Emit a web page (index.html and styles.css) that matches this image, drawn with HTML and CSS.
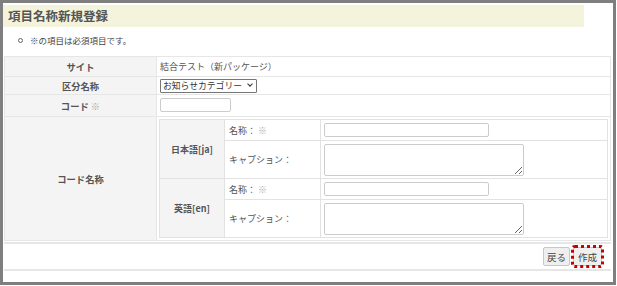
FILE: index.html
```html
<!DOCTYPE html>
<html lang="ja">
<head>
  <meta charset="UTF-8">
  <title>項目名称新規登録</title>
  <link rel="stylesheet" href="styles.css">
</head>
<body>
  <div class="frame">
    <h1 class="page-title">項目名称新規登録</h1>

    <ul class="notes">
      <li>※の項目は必須項目です。</li>
    </ul>

    <table class="form-table">
      <tr class="row-site">
        <th>サイト</th>
        <td>結合テスト（新パッケージ）</td>
      </tr>
      <tr class="row-kind">
        <th>区分名称</th>
        <td>
          <span class="select-wrap">
            <select class="kind-select">
              <option>お知らせカテゴリー</option>
            </select>
          </span>
        </td>
      </tr>
      <tr class="row-code">
        <th>コード <span class="req">※</span></th>
        <td><input type="text" class="code-input"></td>
      </tr>
      <tr>
        <th>コード名称</th>
        <td class="nested-cell">
          <table class="lang-table">
            <tr class="row-name">
              <th rowspan="2" class="lang">日本語[ja]</th>
              <td class="sub">名称： <span class="req">※</span></td>
              <td class="field"><input type="text" class="name-input"></td>
            </tr>
            <tr class="row-caption">
              <td class="sub">キャプション：</td>
              <td class="field"><textarea class="caption-input"></textarea></td>
            </tr>
            <tr class="row-name">
              <th rowspan="2" class="lang">英語[en]</th>
              <td class="sub">名称： <span class="req">※</span></td>
              <td class="field"><input type="text" class="name-input"></td>
            </tr>
            <tr class="row-caption">
              <td class="sub">キャプション：</td>
              <td class="field"><textarea class="caption-input"></textarea></td>
            </tr>
          </table>
        </td>
      </tr>
    </table>

    <div class="actions">
      <button type="button" class="btn">戻る</button>
      <button type="button" class="btn btn-focus">作成</button>
    </div>
  </div>
</body>
</html>
```

FILE: styles.css
```css
body {
  margin: 0;
  background: #fff;
  font-family: "Noto Sans CJK JP", "Noto Sans", sans-serif;
  color: #555;
}

.frame {
  width: 616px;
  height: 285px;
  box-sizing: border-box;
  border: 3px solid #7f7f7f;
  padding-top: 2px;
}

.page-title {
  margin: 0;
  width: 581px;
  height: 22px;
  line-height: 22px;
  padding-left: 5px;
  box-sizing: border-box;
  background: #f4f4dc;
  font-size: 12.5px;
  font-weight: bold;
  color: #555;
}

.notes {
  margin: 7px 0 0;
  padding-left: 15px;
  height: 22px;
  list-style: none;
  font-size: 8.5px;
  line-height: 12px;
  color: #444;
}

.notes li::before {
  content: "";
  display: inline-block;
  width: 3px;
  height: 3px;
  border: 1px solid #666;
  border-radius: 50%;
  margin-right: 7px;
  vertical-align: 1px;
}

.form-table {
  margin-left: 1px;
  width: 607px;
  border-collapse: collapse;
  font-size: 9px;
}

.form-table > tbody > tr > th,
.form-table > tbody > tr > td {
  border: 1px solid #e6e6e6;
}

.form-table > tbody > tr > th {
  width: 151px;
  background: #f4f4f4;
  font-weight: bold;
  font-size: 9.3px;
  color: #555;
  padding: 0;
}

.form-table > tbody > tr > td {
  padding: 0 0 0 3px;
  color: #555;
}

.req {
  font-weight: normal;
  color: #aaa;
}

.row-site { height: 20px; }
.row-kind { height: 18px; }
.row-code { height: 22px; }

.select-wrap {
  position: relative;
  display: inline-block;
  vertical-align: middle;
}

.select-wrap::after {
  content: "";
  position: absolute;
  right: 5px;
  top: 3px;
  width: 3px;
  height: 3px;
  border-right: 1px solid #333;
  border-bottom: 1px solid #333;
  transform: rotate(45deg);
  pointer-events: none;
}

.kind-select {
  display: block;
  appearance: none;
  width: 97px;
  height: 14px;
  padding: 0 0 0 2px;
  font-family: inherit;
  font-size: 8.8px;
  line-height: 12px;
  color: #333;
  border: 1px solid #767676;
  border-radius: 1px;
  background: #fff;
}

.code-input {
  width: 71px;
  height: 14px;
  box-sizing: border-box;
  border: 1px solid #ccc;
  border-radius: 2px;
}

.form-table > tbody > tr > td.nested-cell {
  padding: 2px;
}

.lang-table {
  width: 100%;
  border-collapse: collapse;
  font-size: 9px;
}

.lang-table th,
.lang-table td {
  border: 1px solid #e2e2e2;
  padding: 0;
}

.lang-table .lang {
  width: 64px;
  background: #f4f4f4;
  font-weight: bold;
  color: #555;
}

.lang-table .sub {
  width: 91px;
  padding-left: 4px;
  color: #555;
}

.lang-table .field {
  padding-left: 3px;
}

.row-name { height: 21px; }
.row-caption { height: 38px; }

.name-input {
  display: block;
  width: 165px;
  height: 14px;
  box-sizing: border-box;
  border: 1px solid #ccc;
  border-radius: 2px;
}

.caption-input {
  display: block;
  width: 200px;
  height: 32px;
  box-sizing: border-box;
  border: 1px solid #ccc;
  border-radius: 2px;
  resize: both;
}

.actions {
  margin: 1px 0 0 1px;
  width: 607px;
  height: 29px;
  box-sizing: border-box;
  border-top: 2px solid #e6e6e6;
  border-bottom: 2px solid #e6e6e6;
  display: flex;
  justify-content: flex-end;
  align-items: center;
  gap: 3px;
  padding-right: 9px;
}

.btn {
  height: 19px;
  padding: 0 3px;
  font-family: inherit;
  font-size: 9.5px;
  color: #444;
  background: #efefef;
  border: 1px solid #c8c8c8;
  border-radius: 2px;
}

.btn-focus {
  padding: 0 4px;
  outline: 3px dotted #c80000;
  outline-offset: -1px;
}
```
